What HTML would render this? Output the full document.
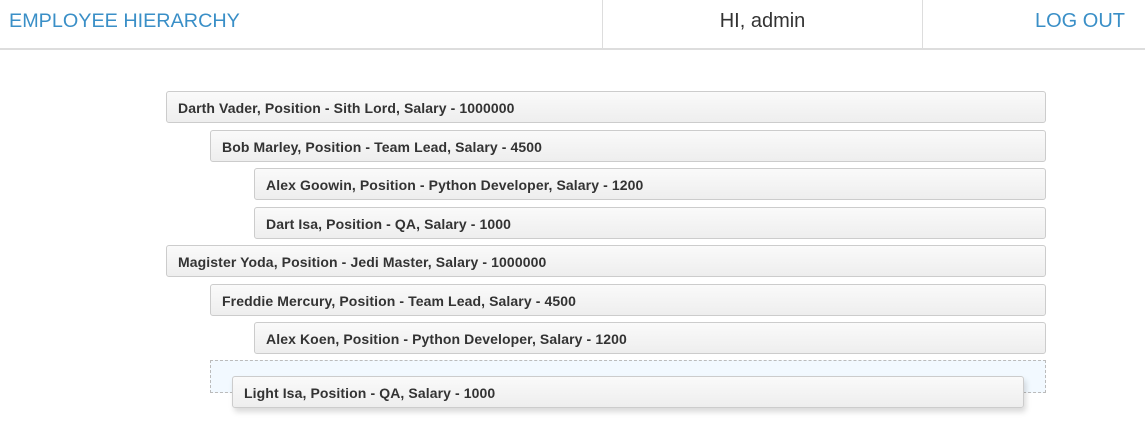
<!DOCTYPE html>
<html><head><style>
body{margin:0;width:1145px;height:424px;background:#fff;font-family:"Liberation Sans",Arial,sans-serif;position:relative;overflow:hidden}
.hdr{position:absolute;left:0;top:0;width:1145px;height:48px;border-bottom:2px solid #ddd}
.hdr div{position:absolute;top:0;height:48px;line-height:42px;font-size:20px}
.it{position:absolute;line-height:32px;border:1px solid #ccc;border-radius:3px;background:linear-gradient(#fafafa,#eee);font-size:14px;letter-spacing:0.1px;font-weight:bold;color:#333;padding-left:11px;box-sizing:border-box;height:32px}
</style></head><body>
<div class="hdr">
<div style="left:9px;color:#3a8fc7;font-size:19.8px">EMPLOYEE HIERARCHY</div>
<div style="left:602px;width:319px;border-left:1px solid #ddd;border-right:1px solid #ddd;text-align:center;color:#333">HI, admin</div>
<div style="right:20px;color:#3a8fc7">LOG OUT</div>
</div>
<div class="it" style="left:166px;top:91px;width:880px">Darth Vader, Position - Sith Lord, Salary - 1000000</div>
<div class="it" style="left:210px;top:130px;width:836px">Bob Marley, Position - Team Lead, Salary - 4500</div>
<div class="it" style="left:254px;top:168px;width:792px">Alex Goowin, Position - Python Developer, Salary - 1200</div>
<div class="it" style="left:254px;top:207px;width:792px">Dart Isa, Position - QA, Salary - 1000</div>
<div class="it" style="left:166px;top:245px;width:880px">Magister Yoda, Position - Jedi Master, Salary - 1000000</div>
<div class="it" style="left:210px;top:284px;width:836px">Freddie Mercury, Position - Team Lead, Salary - 4500</div>
<div class="it" style="left:254px;top:322px;width:792px">Alex Koen, Position - Python Developer, Salary - 1200</div>
<div style="position:absolute;left:210px;top:360px;width:836px;height:33px;box-sizing:border-box;border:1px dashed #bbb;background:#f2f9ff"></div>
<div class="it" style="left:232px;top:376px;width:792px;box-shadow:2px 4px 6px rgba(0,0,0,0.15)">Light Isa, Position - QA, Salary - 1000</div>
</body></html>
